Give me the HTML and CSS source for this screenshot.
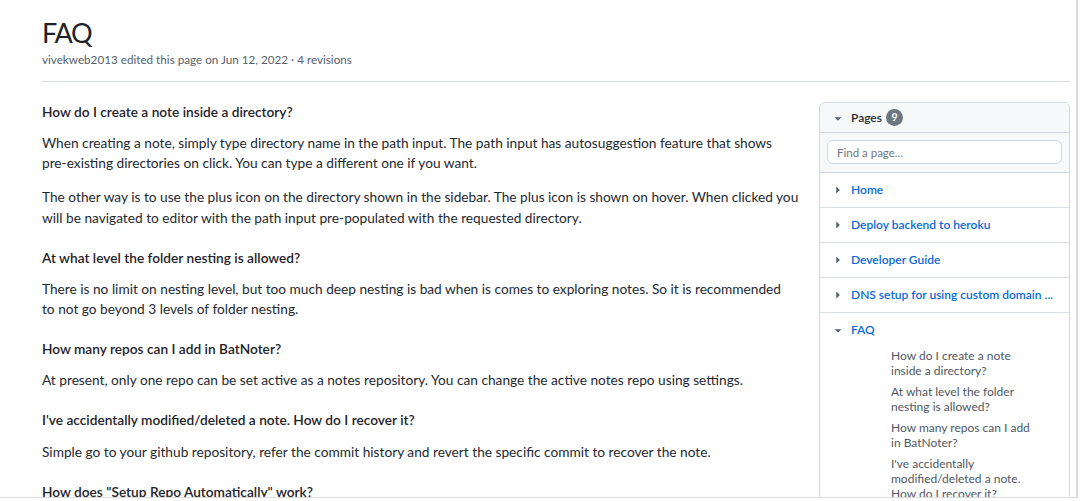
FILE: index.html
```html
<!DOCTYPE html>
<html lang="en">
<head>
<meta charset="utf-8">
<title>FAQ</title>
<link rel="stylesheet" href="styles.css">
</head>
<body>
<div class="frame">
  <div class="page">
    <header class="head">
      <h1 class="title">FAQ</h1>
      <div class="meta">vivekweb2013 edited this page on Jun 12, 2022 · 4 revisions</div>
    </header>
    <div class="layout">
      <main class="content">
        <h4>How do I create a note inside a directory?</h4>
        <p>When creating a note, simply type directory name in the path input. The path input has autosuggestion feature that shows pre-existing directories on click. You can type a different one if you want.</p>
        <p>The other way is to use the plus icon on the directory shown in the sidebar. The plus icon is shown on hover. When clicked you will be navigated to editor with the path input pre-populated with the requested directory.</p>
        <h4>At what level the folder nesting is allowed?</h4>
        <p>There is no limit on nesting level, but too much deep nesting is bad when is comes to exploring notes. So it is recommended<br>to not go beyond 3 levels of folder nesting.</p>
        <h4>How many repos can I add in BatNoter?</h4>
        <p>At present, only one repo can be set active as a notes repository. You can change the active notes repo using settings.</p>
        <h4>I've accidentally modified/deleted a note. How do I recover it?</h4>
        <p>Simple go to your github repository, refer the commit history and revert the specific commit to recover the note.</p>
        <h4>How does "Setup Repo Automatically" work?</h4>
        <p>It creates a new private repository in your github account and sets it as the active notes repository.</p>
      </main>
      <aside class="sidebar">
        <div class="box">
          <div class="box-header">
            <svg class="caret" viewBox="0 0 16 16" width="14" height="14"><path d="m4.427 7.427 3.396 3.396a.25.25 0 0 0 .354 0l3.396-3.396A.25.25 0 0 0 11.396 7H4.604a.25.25 0 0 0-.177.427Z"/></svg>
            <span class="box-title">Pages</span>
            <span class="counter">9</span>
          </div>
          <div class="filter">
            <input class="filter-input" type="text" placeholder="Find a page...">
          </div>
          <ul class="pages">
            <li class="row">
              <div class="summary">
                <svg class="caret" viewBox="0 0 16 16" width="14" height="14"><path d="m6.427 4.427 3.396 3.396a.25.25 0 0 1 0 .354l-3.396 3.396A.25.25 0 0 1 6 11.396V4.604a.25.25 0 0 1 .427-.177Z"/></svg>
                <a class="page-link" href="#">Home</a>
              </div>
            </li>
            <li class="row">
              <div class="summary">
                <svg class="caret" viewBox="0 0 16 16" width="14" height="14"><path d="m6.427 4.427 3.396 3.396a.25.25 0 0 1 0 .354l-3.396 3.396A.25.25 0 0 1 6 11.396V4.604a.25.25 0 0 1 .427-.177Z"/></svg>
                <a class="page-link" href="#">Deploy backend to heroku</a>
              </div>
            </li>
            <li class="row">
              <div class="summary">
                <svg class="caret" viewBox="0 0 16 16" width="14" height="14"><path d="m6.427 4.427 3.396 3.396a.25.25 0 0 1 0 .354l-3.396 3.396A.25.25 0 0 1 6 11.396V4.604a.25.25 0 0 1 .427-.177Z"/></svg>
                <a class="page-link" href="#">Developer Guide</a>
              </div>
            </li>
            <li class="row">
              <div class="summary">
                <svg class="caret" viewBox="0 0 16 16" width="14" height="14"><path d="m6.427 4.427 3.396 3.396a.25.25 0 0 1 0 .354l-3.396 3.396A.25.25 0 0 1 6 11.396V4.604a.25.25 0 0 1 .427-.177Z"/></svg>
                <a class="page-link" href="#">DNS setup for using custom domain ...</a>
              </div>
            </li>
            <li class="row">
              <div class="summary">
                <svg class="caret" viewBox="0 0 16 16" width="14" height="14"><path d="m4.427 7.427 3.396 3.396a.25.25 0 0 0 .354 0l3.396-3.396A.25.25 0 0 0 11.396 7H4.604a.25.25 0 0 0-.177.427Z"/></svg>
                <a class="page-link" href="#">FAQ</a>
              </div>
              <ul class="subs">
                <li class="sub"><a href="#">How do I create a note inside a directory?</a></li>
                <li class="sub"><a href="#">At what level the folder nesting is allowed?</a></li>
                <li class="sub"><a href="#">How many repos can I add in BatNoter?</a></li>
                <li class="sub"><a href="#">I've accidentally modified/deleted a note. How do I recover it?</a></li>
                <li class="sub"><a href="#">How does "Setup Repo Automatically" work?</a></li>
              </ul>
            </li>
          </ul>
        </div>
      </aside>
    </div>
  </div>
</div>
</body>
</html>
```
FILE: styles.css
```css
* { box-sizing: border-box; }

html, body {
  margin: 0;
  padding: 0;
  background: #ffffff;
}

body {
  font-family: Lato, "Liberation Sans", sans-serif;
  color: #24292f;
  font-size: 13.7px;
}

.frame {
  width: 1078px;
  height: 498px;
  border-right: 2px solid #dcdcdc;
  border-bottom: 1px solid #dcdcdc;
  overflow: hidden;
}

.page {
  padding: 0 6px 0 42px;
}

.head {
  padding-bottom: 13px;
  border-bottom: 1px solid #d8dee4;
}

.title {
  margin: 0;
  padding-top: 15px;
  font-size: 27px;
  font-weight: 400;
  letter-spacing: -1.2px;
  line-height: 35px;
  color: #1f2328;
}

.meta {
  font-size: 11.7px;
  line-height: 18px;
  color: #57606a;
}

.layout {
  display: flex;
  align-items: flex-start;
  margin-top: 20.5px;
}

.content {
  width: 758px;
  flex: none;
}

.content h4 {
  margin: 20.5px 0 13.3px;
  font-size: 13.7px;
  font-weight: 600;
  line-height: 17px;
  color: #1f2328;
}

.content h4:first-child {
  margin-top: 0;
}

.content p {
  margin: 0 0 13.6px;
  line-height: 20.4px;
  color: #24292f;
}

.sidebar {
  width: 251px;
  flex: none;
  margin-left: auto;
  margin-top: -0.5px;
}

.box {
  border: 1px solid #d0d7de;
  border-radius: 6px;
  box-shadow: 0 1px 0 rgba(31, 35, 40, 0.04);
  overflow: hidden;
}

.box-header {
  display: flex;
  align-items: center;
  height: 30px;
  padding-left: 11px;
  background: #f6f8fa;
  border-bottom: 1px solid #d0d7de;
}

.caret {
  flex: none;
  fill: #57606a;
  margin-right: 6px;
}

.box-title {
  font-size: 12px;
  font-weight: 600;
  color: #24292f;
}

.counter {
  display: inline-block;
  min-width: 17px;
  height: 17px;
  margin-left: 4px;
  border-radius: 10px;
  background: #6e7781;
  color: #ffffff;
  font-size: 10.5px;
  font-weight: 700;
  line-height: 17px;
  text-align: center;
}

.filter {
  padding: 7px 7px 8px;
  background: #f6f8fa;
  border-bottom: 1px solid #d0d7de;
}

.filter-input {
  display: block;
  width: 100%;
  height: 24px;
  padding: 0 9px;
  border: 1px solid #d0d7de;
  border-radius: 6px;
  background: #ffffff;
  font-family: inherit;
  font-size: 11.5px;
  color: #24292f;
  outline: none;
}

.filter-input::placeholder {
  color: #6e7781;
}

.pages {
  list-style: none;
  margin: 0;
  padding: 0;
}

.row {
  border-bottom: 1px solid #d8dee4;
}

.summary {
  display: flex;
  align-items: center;
  padding: 8px 4px 8px 11px;
  line-height: 18px;
  min-width: 0;
}

.page-link {
  font-size: 12px;
  font-weight: 600;
  color: #0969da;
  text-decoration: none;
  white-space: nowrap;
  overflow: hidden;
  text-overflow: ellipsis;
}

.subs {
  list-style: none;
  margin: 1px 0 0;
  padding: 0 28px 0 71px;
}

.sub {
  margin-bottom: 6px;
  font-size: 12px;
  line-height: 15px;
}

.sub a {
  color: #4f5862;
  text-decoration: none;
}
```
